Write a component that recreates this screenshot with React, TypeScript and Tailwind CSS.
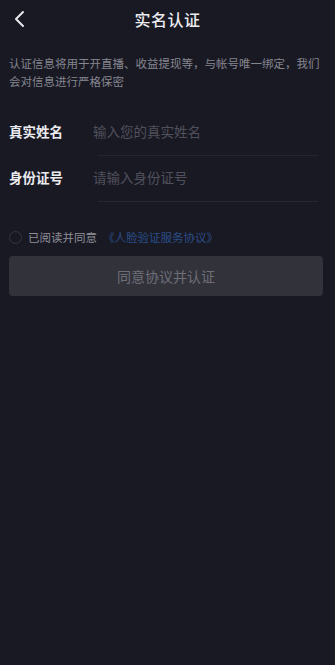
const FIELDS = [
  { label: "真实姓名", placeholder: "输入您的真实姓名" },
  { label: "身份证号", placeholder: "请输入身份证号" },
] as const;

const FONT = {
  fontFamily: '"Noto Sans CJK SC", "Noto Sans", sans-serif',
};

export default function App() {
  return (
    <div
      className="flex min-h-[665px] w-full flex-col bg-[#191924] text-white"
      style={FONT}
    >
      {/* ── 헤더 ── */}
      <header className="relative flex h-[38px] items-center justify-center">
        <button className="absolute left-[9px] top-[9px] flex h-5 w-5 items-center justify-center">
          <svg width="14" height="18" viewBox="0 0 14 18" fill="none">
            <path
              d="M11 2 L4 9 L11 16"
              stroke="#e8e8ec"
              strokeWidth="2"
              strokeLinecap="round"
              strokeLinejoin="round"
            />
          </svg>
        </button>
        <h1 className="text-[16px] font-medium tracking-[0.5px] text-[#ececf0]">
          实名认证
        </h1>
      </header>

      {/* ── 안내문 ── */}
      <p className="mt-[16px] px-[9px] text-[11.5px] leading-[18px] text-[#85858e]">
        认证信息将用于开直播、收益提现等，与帐号唯一绑定，我们会对信息进行严格保密
      </p>

      {/* ── 입력 ── */}
      <div className="mt-[20px] flex flex-col">
        {FIELDS.map(({ label, placeholder }) => (
          <div key={label} className="flex h-[46px] items-center pl-[9px]">
            <span className="w-[89px] shrink-0 pb-[3px] text-[13.5px] font-bold text-[#ececf0]">
              {label}
            </span>
            <div className="mr-[17px] flex h-full flex-1 items-center border-b border-[#262631] pb-[3px]">
              <span className="-ml-[5px] text-[13.5px] text-[#50505b]">
                {placeholder}
              </span>
            </div>
          </div>
        ))}
      </div>

      {/* ── 동의 ── */}
      <div className="mt-[27px] flex items-center gap-[6px] px-[9px]">
        <span className="h-[13px] w-[13px] rounded-full border border-[#35353f]" />
        <span className="text-[11.5px] text-[#8f8f98]">已阅读并同意</span>
        <span className="text-[11.5px] text-[#2a4d86]">《人脸验证服务协议》</span>
      </div>

      {/* ── 버튼 ── */}
      <button className="ml-[9px] mr-[12px] mt-[10px] flex h-[40px] items-center justify-center rounded-[4px] bg-[#32323b] text-[14px] text-[#6e6e77]">
        同意协议并认证
      </button>
    </div>
  );
}
